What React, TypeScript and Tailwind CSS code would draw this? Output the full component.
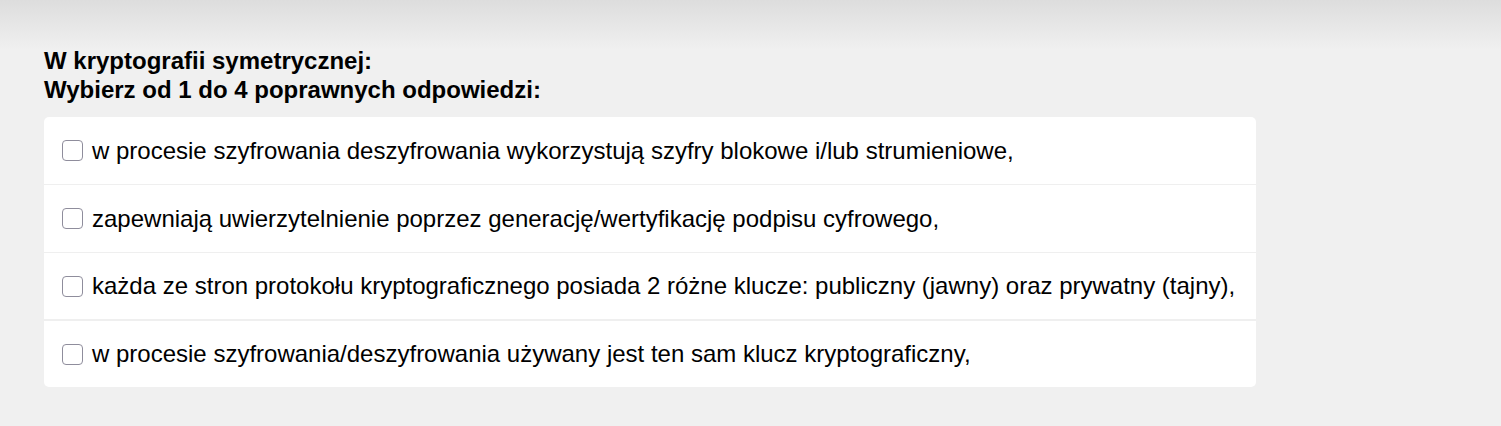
import React from "react";

const options = [
  { text: "w procesie szyfrowania deszyfrowania wykorzystują szyfry blokowe i/lub strumieniowe,", h: "h-[68px]", b: "border-b border-[#efefef]" },
  { text: "zapewniają uwierzytelnienie poprzez generację/wertyfikację podpisu cyfrowego,", h: "h-[68px]", b: "border-b border-[#efefef]" },
  { text: "każda ze stron protokołu kryptograficznego posiada 2 różne klucze: publiczny (jawny) oraz prywatny (tajny),", h: "h-[68px]", b: "border-b-2 border-[#efefef]" },
  { text: "w procesie szyfrowania/deszyfrowania używany jest ten sam klucz kryptograficzny,", h: "h-[66px]", b: "" },
];

export default function App() {
  return (
    <div
      className="min-h-[426px] w-full bg-[linear-gradient(to_bottom,#dddddd_0px,#f0f0f0_50px,#f0f0f0_100%)] pt-[47px] pl-[44px]"
      style={{ fontFamily: '"Liberation Sans", Arial, sans-serif' }}
    >
      <h1 className="text-[24px] font-bold leading-[28.5px] text-black">
        W kryptografii symetrycznej:
        <br />
        Wybierz od 1 do 4 poprawnych odpowiedzi:
      </h1>
      <div className="mt-[13px] w-[1212px] rounded-[5px] bg-white">
        {options.map((o, i) => (
          <label key={i} className={`flex items-center pl-[18px] ${o.h} ${o.b}`}>
            <span className="box-border h-[21px] w-[21px] shrink-0 rounded-[4px] border border-[#8f8d9c] bg-white" />
            <span className="ml-[9px] text-[24px] leading-[28px] text-black">{o.text}</span>
          </label>
        ))}
      </div>
    </div>
  );
}
